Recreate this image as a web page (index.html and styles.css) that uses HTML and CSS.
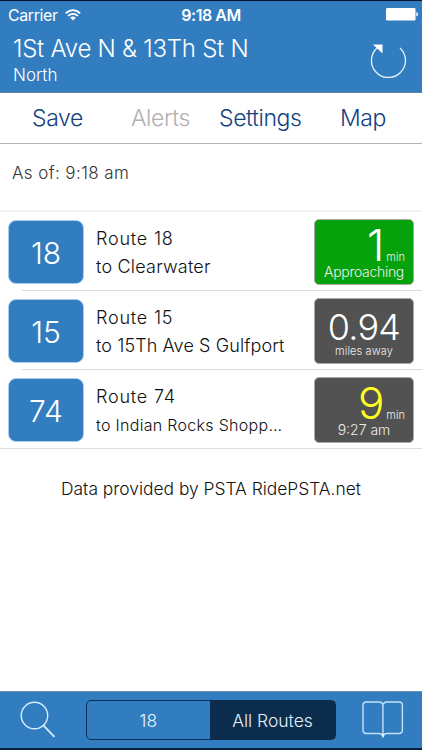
FILE: index.html
```html
<!DOCTYPE html>
<html>
<head>
    <meta charset="utf-8">
    <title>Bus Arrivals</title>
    <link rel="stylesheet" href="styles.css">
</head>
<body>

    <div class="header">
        <div class="status-bar">
            <div class="carrier">
                <span>Carrier</span>
                <svg class="wifi" width="16" height="12" viewBox="0 0 16 12">
                    <path d="M0.8 4.2 Q8 -2 15.2 4.2 M3 6.9 Q8 2.8 13 6.9" fill="none" stroke="#fff" stroke-width="1.8"/>
                    <path d="M5.2 8.7 Q8 6.3 10.8 8.7 L8 11.6 Z" fill="#fff"/>
                </svg>
            </div>
            <div class="clock">9:18 AM</div>
            <svg class="battery" width="32" height="13" viewBox="0 0 32 13">
                <rect x="0" y="0" width="29.5" height="12.5" rx="1.2" fill="#fff"/>
                <path d="M30.3 4 Q32 4.5 32 6.2 Q32 8 30.3 8.5 Z" fill="#fff"/>
            </svg>
        </div>
        <div class="title-row">
            <div>
                <h1>1St Ave N &amp; 13Th St N</h1>
                <div class="direction">North</div>
            </div>
            <svg class="refresh" width="38" height="38" viewBox="0 0 38 38">
                <path d="M31 8 A17 17 0 1 1 8.5 7.5" fill="none" stroke="#e3f1fb" stroke-width="1.3"/>
                <path d="M4 4.5 L13.5 4.5 L13.5 13.5 Z" fill="#fff"/>
            </svg>
        </div>
    </div>

    <div class="menu">
        <a class="menu-save">Save</a>
        <a class="menu-alerts">Alerts</a>
        <a class="menu-settings">Settings</a>
        <a class="menu-map">Map</a>
    </div>

    <div class="as-of"><span>As of: 9:18 am</span></div>

    <div class="routes">
        <div class="route">
            <div class="badge">18</div>
            <div class="info">
                <div class="name">Route 18</div>
                <div class="dest clearwater">to Clearwater</div>
            </div>
            <div class="tile green">
                <div class="time"><span class="number">1</span><span class="unit">min</span></div>
                <div class="note approaching">Approaching</div>
            </div>
        </div>
        <div class="route">
            <div class="badge">15</div>
            <div class="info">
                <div class="name">Route 15</div>
                <div class="dest gulfport">to 15Th Ave S Gulfport</div>
            </div>
            <div class="tile">
                <div class="distance">0.94</div>
                <div class="note away">miles away</div>
            </div>
        </div>
        <div class="route">
            <div class="badge">74</div>
            <div class="info">
                <div class="name">Route 74</div>
                <div class="dest small">to Indian Rocks Shopp…</div>
            </div>
            <div class="tile">
                <div class="time"><span class="number yellow">9</span><span class="unit">min</span></div>
                <div class="note arrival">9:27 am</div>
            </div>
        </div>
    </div>

    <div class="credit">Data provided by PSTA RidePSTA.net</div>

    <div class="footer">
        <svg width="36" height="38" viewBox="0 0 36 38">
            <circle cx="14.5" cy="14.5" r="13.3" fill="none" stroke="#d9edfb" stroke-width="1.4"/>
            <path d="M23 24 L34.5 36" stroke="#d9edfb" stroke-width="1.8"/>
        </svg>
        <div class="segments">
            <div class="segment">18</div>
            <div class="segment selected">All Routes</div>
        </div>
        <svg class="book" width="42" height="38" viewBox="0 0 42 38">
            <path d="M21 36 V3.5 Q20 1 17 1 H4.5 Q1 1 1 4.5 V29 Q1 32.5 4.5 32.5 H17 Q20 32.5 21 35 Q22 32.5 25 32.5 H37 Q40.5 32.5 40.5 29 V4.5 Q40.5 1 37 1 H25 Q22 1 21 3.5" fill="none" stroke="#c5e1f6" stroke-width="1.4"/>
            <path d="M19 33 L21 37 L23 33 Z" fill="#e3f1fb"/>
        </svg>
    </div>

</body>
</html>
```

FILE: styles.css
```css
* {
    box-sizing: border-box;
}

body {
    margin: 0;
    height: 750px;
    display: flex;
    flex-direction: column;
    font-family: Inter, "Liberation Sans", sans-serif;
    font-weight: 300;
    color: #111;
    background-color: #fff;
    white-space: nowrap;
    overflow: hidden;
}

.header {
    height: 93px;
    background-color: #327dc0;
    border-top: 1px solid #09112f;
    border-bottom: 1px solid #6086a9;
    color: #fff;
}

.status-bar {
    display: grid;
    grid-template-columns: 1fr auto 1fr;
    align-items: center;
    height: 27px;
    padding: 0 8px;
    font-size: 16px;
    font-weight: 400;
}

.carrier {
    display: flex;
    align-items: center;
    gap: 7px;
    letter-spacing: -0.4px;
}

.clock {
    font-weight: 600;
    letter-spacing: -0.5px;
}

.battery {
    justify-self: end;
    margin-right: -4px;
}

.title-row {
    display: flex;
    justify-content: space-between;
    padding: 7px 15px 0 13px;
}

h1 {
    margin: 0;
    font-size: 24px;
    line-height: 28px;
    font-weight: 300;
    letter-spacing: -0.25px;
}

.direction {
    font-size: 17px;
    line-height: 24px;
}

.refresh {
    margin-top: 5px;
}

.menu {
    display: flex;
    height: 51px;
    padding-left: 32px;
    border-bottom: 1px solid #b4b4b4;
    font-size: 23px;
    line-height: 51px;
    letter-spacing: -0.4px;
    color: #12427f;
}

.menu-save {
    width: 99px;
}

.menu-alerts {
    width: 88px;
    color: #b0b0b0;
}

.menu-settings {
    width: 121px;
}

.as-of {
    height: 68px;
    padding-left: 12px;
    border-bottom: 2px solid #f3f3f3;
    font-size: 17px;
    line-height: 58px;
    letter-spacing: 0.4px;
    color: #333;
}

.route {
    display: flex;
    align-items: center;
    height: 79px;
    padding: 0 8px;
    background: linear-gradient(#ddd, #ddd) 22px 100% / 100% 1px no-repeat;
}

.route:last-child {
    background-position: 0 100%;
}

.badge {
    width: 76px;
    height: 64px;
    border: 1px solid #a9cdec;
    border-radius: 8px;
    background-color: #327dc0;
    color: #fff;
    font-size: 30px;
    line-height: 64px;
    text-align: center;
}

.info {
    flex: 1;
    padding: 2px 0 0 12px;
    font-size: 18px;
    line-height: 28px;
}

.name {
    letter-spacing: 0.8px;
}

.clearwater {
    letter-spacing: 0.2px;
}

.gulfport {
    letter-spacing: 0.1px;
}

.small {
    font-size: 16px;
    letter-spacing: 0.3px;
}

.tile {
    width: 100px;
    height: 66px;
    border: 1px solid #aaa;
    border-radius: 5px;
    background-color: #525252;
    color: #eee;
    text-align: center;
}

.green {
    background-color: #05a20c;
}

.time {
    display: flex;
    justify-content: flex-end;
    align-items: baseline;
    gap: 2px;
    height: 44px;
    padding-right: 8px;
    line-height: 50px;
}

.number {
    font-size: 44px;
    color: #fff;
}

.yellow {
    color: #ff2;
}

.unit {
    font-size: 11px;
}

.note {
    font-size: 14px;
    line-height: 15px;
}

.approaching {
    letter-spacing: -0.3px;
}

.distance {
    height: 45px;
    font-size: 36px;
    line-height: 57px;
    letter-spacing: -0.8px;
    color: #fff;
}

.away {
    font-size: 11px;
    line-height: 14px;
    letter-spacing: 0.1px;
}

.credit {
    margin-top: 26px;
    font-size: 17.4px;
    line-height: 28px;
    text-align: center;
}

.footer {
    display: flex;
    align-items: center;
    height: 59px;
    margin-top: auto;
    padding: 0 18px 0 20px;
    background-color: #327dc0;
    border-top: 1px solid #6894ba;
    border-bottom: 2px solid #09203b;
}

.segments {
    display: flex;
    width: 251px;
    height: 40px;
    margin: 0 26px 0 30px;
    border: 1px solid #0c2c4e;
    border-radius: 5px;
    font-size: 17.5px;
    line-height: 40px;
    text-align: center;
    color: #e3f1fb;
}

.segment {
    width: 123px;
}

.selected {
    flex: 1;
    background-color: #0c2c4e;
}
```
